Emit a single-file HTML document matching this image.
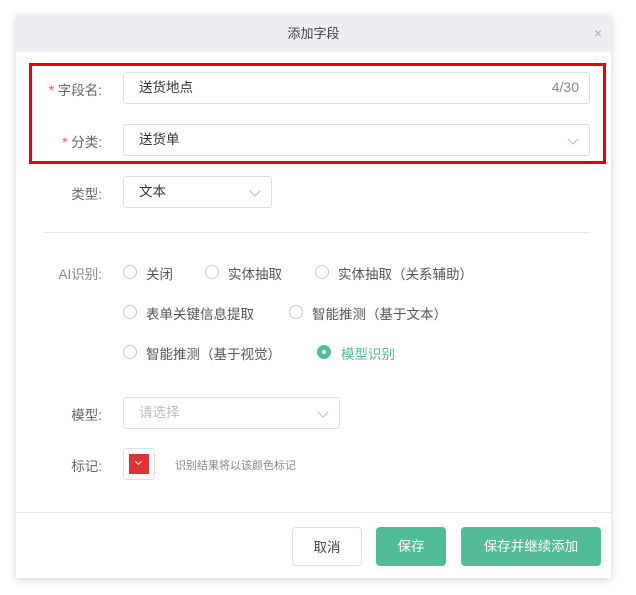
<!DOCTYPE html>
<html><head><meta charset="utf-8"><style>
body{margin:0;width:636px;height:595px;background:#fff;position:relative;font-family:"Liberation Sans","Noto Sans CJK SC",sans-serif;font-size:13px;color:#333;overflow:hidden}
.a{position:absolute}
.dlg{left:16px;top:15px;width:595px;height:563px;background:#fff;box-shadow:0 2px 8px rgba(0,0,0,.18)}
.hd{left:16px;top:15px;width:595px;height:37px;background:#eceef2;text-align:center;line-height:37px;font-size:13px;color:#444}
.inp{border:1px solid #dcdfe6;border-radius:3px;background:#fff;box-sizing:border-box;line-height:29px;padding-left:15px;color:#333;font-size:13.5px}
.lbl{color:#666;text-align:right;width:62px;left:40px;font-size:13.5px}
.req{color:#e55}
.chev{position:absolute;right:12px;top:10px;width:7px;height:7px;border-right:1px solid #bbb;border-bottom:1px solid #bbb;transform:rotate(45deg)}
.r{width:12px;height:12px;border:1px solid #ccc;border-radius:50%}
.t{color:#555;font-size:13.5px}
.btn{border-radius:4px;text-align:center;line-height:39px;height:39px;box-sizing:border-box;top:527px;font-size:13.5px}
.g{background:#52bb97;color:#fff}
</style></head><body>
<div class="a dlg"></div>
<div class="a hd">添加字段</div>
<div class="a" style="left:594px;top:25px;color:#aaa;font-size:14px">×</div>
<div class="a" style="left:29px;top:63px;width:571px;height:95px;border:3px solid #e00"></div>
<div class="a lbl" style="top:79px"><span class="req">* </span>字段名:</div>
<div class="a inp" style="left:123px;top:72px;width:467px;height:32px">送货地点<span style="position:absolute;right:10px;color:#888;font-size:14px">4/30</span></div>
<div class="a lbl" style="top:131px"><span class="req">* </span>分类:</div>
<div class="a inp" style="left:123px;top:124px;width:467px;height:32px">送货单<i class="chev"></i></div>
<div class="a lbl" style="top:183px">类型:</div>
<div class="a inp" style="left:123px;top:176px;width:149px;height:32px">文本<i class="chev"></i></div>
<div class="a" style="left:44px;top:232px;width:546px;height:1px;background:#e4e6ea"></div>
<div class="a lbl" style="top:263px;color:#888">AI识别:</div>
<div class="a r" style="left:123px;top:265px"></div><div class="a t" style="left:146px;top:263px">关闭</div>
<div class="a r" style="left:205px;top:265px"></div><div class="a t" style="left:228px;top:263px">实体抽取</div>
<div class="a r" style="left:315px;top:265px"></div><div class="a t" style="left:338px;top:263px">实体抽取（关系辅助）</div>
<div class="a r" style="left:123px;top:305px"></div><div class="a t" style="left:146px;top:303px">表单关键信息提取</div>
<div class="a r" style="left:289px;top:305px"></div><div class="a t" style="left:312px;top:303px">智能推测（基于文本）</div>
<div class="a r" style="left:123px;top:345px"></div><div class="a t" style="left:146px;top:343px">智能推测（基于视觉）</div>
<div class="a" style="left:317px;top:345px;width:14px;height:14px;border-radius:50%;background:#52bb97"><div class="a" style="left:5px;top:5px;width:4px;height:4px;border-radius:50%;background:#fff"></div></div>
<div class="a" style="left:341px;top:343px;color:#52bb97;font-size:13.5px">模型识别</div>
<div class="a lbl" style="top:404px">模型:</div>
<div class="a inp" style="left:123px;top:397px;width:217px;height:32px;color:#bbb">请选择<i class="chev"></i></div>
<div class="a lbl" style="top:455px">标记:</div>
<div class="a" style="left:123px;top:448px;width:32px;height:32px;border:1px solid #dcdfe6;border-radius:3px;box-sizing:border-box"><div class="a" style="left:5px;top:5px;width:20px;height:20px;background:#e03232"><i class="a" style="left:7px;top:5px;width:4px;height:4px;border-right:1px solid #fff;border-bottom:1px solid #fff;transform:rotate(45deg)"></i></div></div>
<div class="a" style="left:175px;top:457px;font-size:11px;color:#888">识别结果将以该颜色标记</div>
<div class="a" style="left:16px;top:512px;width:595px;height:1px;background:#e4e6ea"></div>
<div class="a btn" style="left:292px;width:70px;border:1px solid #dcdfe6;color:#444">取消</div>
<div class="a btn g" style="left:376px;width:70px">保存</div>
<div class="a btn g" style="left:461px;width:140px">保存并继续添加</div>
</body></html>
